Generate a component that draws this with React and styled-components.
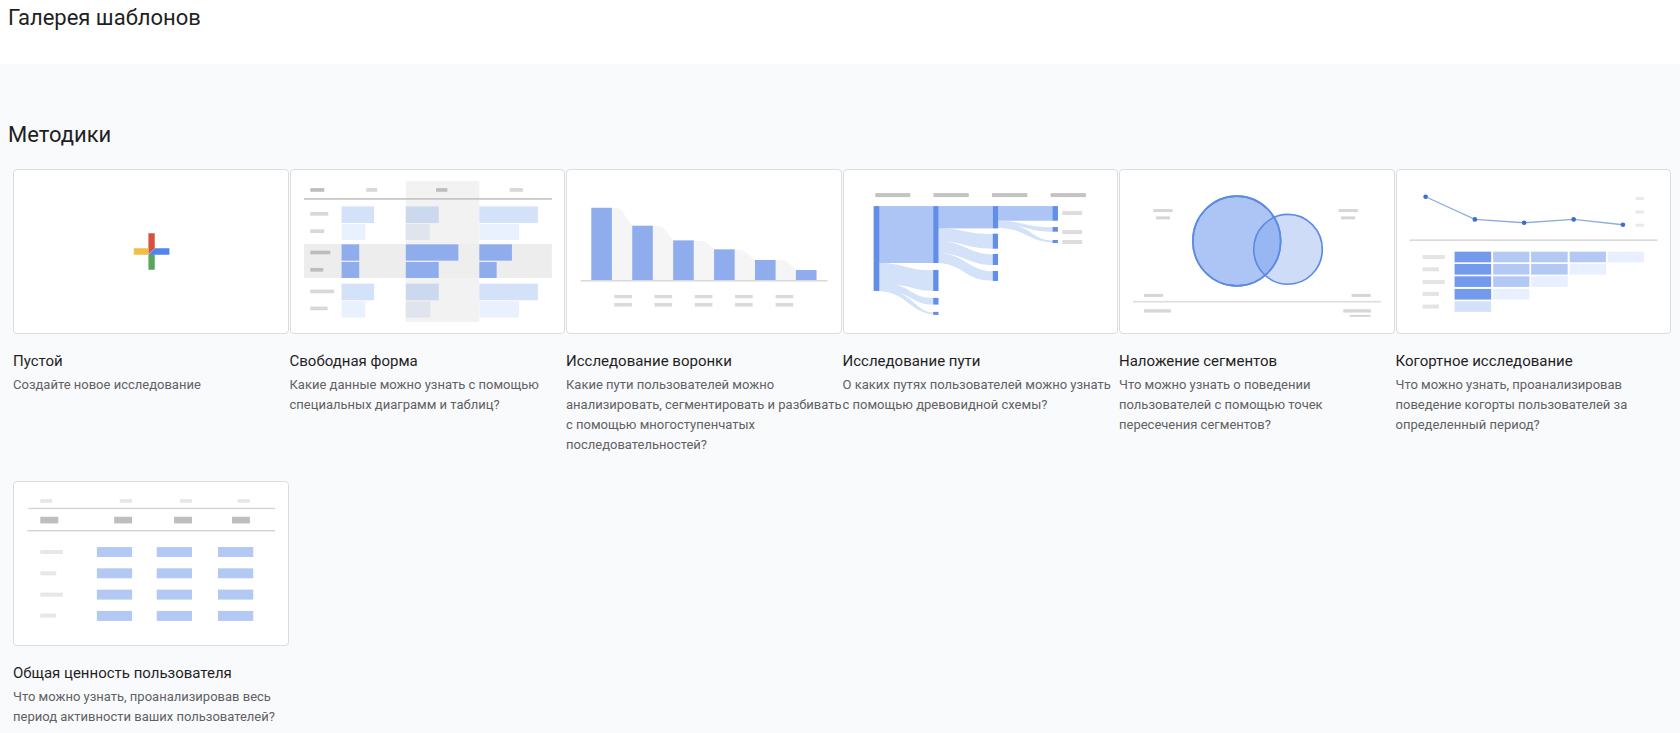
import React from 'react'
import styled, { createGlobalStyle } from 'styled-components'

const GlobalStyle = createGlobalStyle`
    * {
        box-sizing: border-box;
    }

    body {
        margin: 0;
        background: #f9fafc;
        font-family: Roboto, 'Open Sans', sans-serif;
        color: #1f1f1f;
    }
`

const Header = styled.header`
    height: 64px;
    padding: 4px 8px;
    background: #fff;
`

const Heading = styled.h1`
    margin: 0;
    font-size: 22px;
    line-height: 28px;
    font-weight: 400;
`

const Section = styled.main`
    padding-top: 57px;
`

const SectionTitle = styled(Heading)`
    padding: 0 8px;
`

const Grid = styled.ul`
    display: grid;
    grid-template-columns: repeat(6, minmax(0, 1fr));
    row-gap: 26px;
    margin: 20px 0 0;
    padding: 0 8px 0 13px;
    list-style: none;
`

const Card = styled.button`
    display: flex;
    flex-direction: column;
    align-items: stretch;
    width: 100%;
    padding: 0;
    border: none;
    background: none;
    color: inherit;
    font-family: inherit;
    text-align: left;
    cursor: pointer;
`

const Thumb = styled.span`
    display: block;
    height: 165px;
    margin-right: 1px;
    border: 1px solid #dadddb;
    border-radius: 4px;
    background: #fff;
    overflow: hidden;

    ${Card}:hover & {
        border-color: #8fb0ee;
    }
`

const Drawing = styled.svg`
    display: block;
    width: 100%;
    height: 100%;
`

const CardTitle = styled.span`
    margin-top: 15px;
    font-size: 15px;
    line-height: 24px;
`

const CardText = styled.span`
    margin-top: 2px;
    font-size: 13px;
    line-height: 20px;
    color: #5f6163;
`

// draws a list of [x, y, width, height] in one colour
const Rects = ({ items, fill }) => (
    <g fill={fill}>
        {items.map(([x, y, w, h]) => (
            <rect key={`${x}-${y}`} x={x} y={y} width={w} height={h} />
        ))}
    </g>
)

const Blank = () => (
    <Drawing viewBox="41 30 822 489">
        <path fill="#d75140" d="M445 220h19v45l-19 18z" />
        <path fill="#f0be46" d="M401 265h44v19h-44z" />
        <path fill="#58a55c" d="M445 283h19v46h-19z" />
        <path fill="#5383ec" d="M464 265h44v19h-63z" />
    </Drawing>
)

const FreeForm = () => (
    <Drawing viewBox="17 30 822 489">
        <Rects fill="#ededed" items={[[56, 252, 745, 102]]} />
        <Rects fill="#f2f2f2" items={[[362, 63, 221, 423]]} />
        <Rects fill="#eeeeee" items={[[362, 252, 221, 102]]} />
        <Rects fill="#bdbdbd" items={[[75, 84, 42, 11], [453, 84, 34, 11], [75, 272, 60, 11], [75, 324, 39, 11]]} />
        <Rects fill="#d8d8d8" items={[[243, 84, 33, 11], [674, 84, 40, 11], [75, 156, 54, 11], [75, 208, 42, 11], [75, 389, 72, 11], [75, 440, 52, 11]]} />
        <Rects fill="#c4c4c4" items={[[56, 114, 745, 5]]} />
        <Rects fill="#d3e1f9" items={[[169, 139, 98, 50], [583, 139, 176, 50], [169, 371, 98, 50], [583, 371, 176, 50]]} />
        <Rects fill="#e9f1fe" items={[[169, 192, 72, 48], [583, 192, 119, 48], [169, 424, 71, 49], [583, 424, 119, 49]]} />
        <Rects fill="#cbd8ee" items={[[362, 139, 99, 50], [362, 371, 99, 50]]} />
        <Rects fill="#e0e4ec" items={[[362, 192, 72, 48], [362, 424, 74, 49]]} />
        <Rects
            fill="#8fadec"
            items={[[169, 253, 53, 49], [169, 306, 53, 48], [362, 253, 158, 49], [362, 306, 99, 48], [583, 253, 98, 49], [583, 306, 52, 48]]}
        />
    </Drawing>
)

const Funnel = () => (
    <Drawing viewBox="21 30 822 489">
        <g fill="#f5f5f5">
            <path d="M155 144h14q12 0 19 12l30 42v162h-63z" />
            <path d="M278 198h16q13 0 20 9l28 35v118h-64z" />
            <path d="M401 242h22q13 0 20 6l21 22v90h-63z" />
            <path d="M524 269h14q13 0 21 8l28 25v58h-63z" />
            <path d="M647 301h20q13 0 21 7l22 23v29h-63z" />
        </g>
        <Rects
            fill="#8fadec"
            items={[[94, 143, 62, 218], [217, 197, 62, 164], [340, 241, 62, 120], [463, 268, 62, 93], [586, 300, 62, 61], [709, 330, 62, 31]]}
        />
        <Rects fill="#dadada" items={[[62, 360, 742, 5]]} />
        {[163, 284, 405, 526, 648].map((x) => (
            <Rects key={x} fill="#dadada" items={[[x, 405, 53, 10], [x, 429, 53, 11]]} />
        ))}
    </Drawing>
)

const Path = () => (
    <Drawing viewBox="23 30 822 489">
        <Rects fill="#c3c3c3" items={[[117, 99, 105, 12], [292, 99, 106, 12], [468, 99, 106, 12], [644, 99, 106, 12]]} />
        <Rects fill="#dddddd" items={[[679, 153, 60, 12], [679, 210, 60, 12], [679, 240, 60, 12]]} />
        <g fill="#d3e1f9">
            <path d="M128 309C205 309 205 331 291 331V393C230 393 225 376 180 376C225 384 230 414 291 414V434C235 434 225 404 190 402C230 410 245 456 291 458V463C225 460 210 396 128 393Z" />
            <path d="M306 204C385 206 385 222 470 222V266C390 266 385 246 310 243C385 246 400 283 470 283V315C400 315 380 281 310 279C385 283 400 334 470 334V362C385 362 390 316 306 308Z" />
            <path d="M485 182C560 182 565 202 651 202V215C585 215 575 199 530 198C585 200 590 240 651 242V247C580 246 570 205 485 204Z" />
        </g>
        <Rects fill="#adc5f4" items={[[128, 138, 163, 171], [306, 138, 164, 67], [485, 138, 166, 44]]} />
        <Rects
            fill="#628ee9"
            items={[
                [112, 138, 17, 255],
                [291, 138, 16, 171], [291, 330, 16, 63], [291, 414, 16, 20], [291, 456, 16, 9],
                [470, 138, 16, 67], [470, 221, 16, 45], [470, 282, 16, 33], [470, 333, 16, 30],
                [650, 138, 16, 44], [650, 201, 16, 14], [650, 240, 16, 9]
            ]}
        />
    </Drawing>
)

const Overlap = () => (
    <Drawing viewBox="23 30 822 489">
        <Rects
            fill="#d6d6d6"
            items={[
                [123, 147, 58, 9], [131, 169, 42, 9], [680, 147, 58, 9], [687, 169, 43, 9],
                [95, 402, 58, 9], [95, 448, 81, 10], [719, 402, 58, 9], [694, 448, 83, 10], [713, 465, 63, 6]
            ]}
        />
        <Rects fill="#dedede" items={[[62, 423, 745, 5]]} />
        <g stroke="#5e8be2" strokeWidth="5">
            <ellipse cx="374" cy="243" rx="132" ry="135" fill="#adc5f4" />
            <ellipse cx="528" cy="268" rx="103" ry="105" fill="#6f98eb" fillOpacity="0.34" />
            <ellipse cx="374" cy="243" rx="132" ry="135" fill="none" />
        </g>
    </Drawing>
)

const points = [[112, 110], [260, 178], [408, 188], [557, 178], [705, 194]]

const Cohort = () => (
    <Drawing viewBox="26 30 822 489">
        <polyline points={points.join(' ')} fill="none" stroke="#8eace0" strokeWidth="4" />
        {points.map(([x, y]) => <circle key={x} cx={x} cy={y} r="7" fill="#3b6fc9" />)}
        <Rects fill="#e9e9e9" items={[[743, 111, 25, 9], [743, 151, 25, 9], [743, 191, 25, 9]]} />
        <Rects fill="#dadada" items={[[64, 238, 745, 5]]} />
        <Rects fill="#e4e4e4" items={[[103, 285, 67, 12], [103, 322, 49, 12], [103, 360, 67, 12], [103, 396, 49, 12], [103, 434, 49, 12]]} />
        <Rects fill="#739aed" items={[[199, 275, 110, 32], [199, 312, 110, 32], [199, 349, 110, 32], [199, 387, 110, 32]]} />
        <Rects fill="#b3c9f4" items={[[315, 275, 109, 32], [429, 275, 110, 32], [545, 275, 109, 32], [315, 312, 109, 32], [429, 312, 110, 32], [315, 349, 109, 32]]} />
        <Rects fill="#e8effe" items={[[659, 275, 109, 32], [545, 312, 109, 32], [429, 349, 110, 32], [315, 387, 109, 32]]} />
        <Rects fill="#d3e1f9" items={[[199, 424, 110, 32]]} />
    </Drawing>
)

const Lifetime = () => (
    <Drawing viewBox="41 36 822 489">
        <Rects fill="#e6e7e7" items={[[120, 87, 36, 11], [359, 87, 37, 11], [540, 87, 36, 11], [713, 87, 37, 11]]} />
        <Rects fill="#d2d2d2" items={[[84, 113, 742, 4], [81, 180, 745, 4]]} />
        <Rects fill="#bdbec0" items={[[120, 140, 54, 20], [342, 140, 54, 20], [522, 140, 54, 20], [696, 140, 54, 20]]} />
        <Rects fill="#e6e7e7" items={[[120, 240, 68, 12], [120, 304, 48, 12], [120, 368, 68, 12], [120, 431, 48, 12]]} />
        {[231, 295, 359, 423].map((y) => (
            <Rects key={y} fill="#b3c9f4" items={[[290, y, 106, 30], [470, y, 106, 30], [654, y, 106, 30]]} />
        ))}
    </Drawing>
)

const templates = [
    { title: 'Пустой', text: 'Создайте новое исследование', Picture: Blank },
    { title: 'Свободная форма', text: 'Какие данные можно узнать с помощью специальных диаграмм и таблиц?', Picture: FreeForm },
    {
        title: 'Исследование воронки',
        text: 'Какие пути пользователей можно анализировать, сегментировать и разбивать с помощью многоступенчатых последовательностей?',
        Picture: Funnel
    },
    { title: 'Исследование пути', text: 'О каких путях пользователей можно узнать с помощью древовидной схемы?', Picture: Path },
    { title: 'Наложение сегментов', text: 'Что можно узнать о поведении пользователей с помощью точек пересечения сегментов?', Picture: Overlap },
    { title: 'Когортное исследование', text: 'Что можно узнать, проанализировав поведение когорты пользователей за определенный период?', Picture: Cohort },
    { title: 'Общая ценность пользователя', text: 'Что можно узнать, проанализировав весь период активности ваших пользователей?', Picture: Lifetime }
]

function App() {
    return (
        <>
            <GlobalStyle />
            <Header>
                <Heading>Галерея шаблонов</Heading>
            </Header>
            <Section>
                <SectionTitle as="h2">Методики</SectionTitle>
                <Grid>
                    {templates.map(({ title, text, Picture }) => (
                        <li key={title}>
                            <Card type="button">
                                <Thumb><Picture /></Thumb>
                                <CardTitle>{title}</CardTitle>
                                <CardText>{text}</CardText>
                            </Card>
                        </li>
                    ))}
                </Grid>
            </Section>
        </>
    )
}

export default App
